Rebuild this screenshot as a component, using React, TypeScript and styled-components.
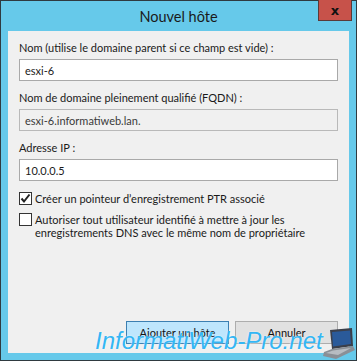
import React from "react";
import styled, { createGlobalStyle } from "styled-components";

const Global = createGlobalStyle`
  html, body { margin: 0; padding: 0; background: #ffffff; }
  #root { width: 357px; height: 361px; }
`;

const Window = styled.div`
  position: relative;
  box-sizing: border-box;
  width: 357px;
  height: 361px;
  border: 1px solid #2f3a40;
  background: #66c9ea;
  display: flex;
  flex-direction: column;
  padding: 0 7px 7px 7px;
  font-family: Lato, "Noto Sans", sans-serif;
`;

const TitleBar = styled.div`
  height: 30px;
  flex: none;
  display: flex;
  align-items: center;
  justify-content: center;
`;

const Title = styled.div`
  font-size: 14.5px;
  color: #1a1a1a;
  margin-top: 1px;
`;

const CloseButton = styled.div`
  position: absolute;
  top: -1px;
  right: 4px;
  width: 34px;
  height: 21px;
  box-sizing: border-box;
  background: #c7524a;
  border: 1px solid #5a3a38;
  border-top: none;
  display: flex;
  align-items: center;
  justify-content: center;
  color: #111;
  font-family: "DejaVu Sans", sans-serif;
  font-weight: bold;
  font-size: 13px;
  line-height: 1;
`;

const Body = styled.div`
  flex: 1;
  background: #f0f0f0;
  display: flex;
  flex-direction: column;
  padding: 9px 11px 0 11px;
  font-size: 11px;
  color: #1a1a1a;
  white-space: nowrap;
`;

const Field = styled.div`
  display: flex;
  flex-direction: column;
  gap: 3px;
  margin-bottom: 9px;
`;

const Label = styled.div`
  line-height: 16px;
`;

const Input = styled.div<{ $disabled?: boolean }>`
  box-sizing: border-box;
  height: 22px;
  border: 1px solid ${(p) => (p.$disabled ? "#b9b9b9" : "#a9a9a9")};
  background: ${(p) => (p.$disabled ? "#f0f0f0" : "#ffffff")};
  color: ${(p) => (p.$disabled ? "#3a3a3a" : "#1a1a1a")};
  padding: 0 5px;
  display: flex;
  align-items: center;
`;

const CheckRow = styled.div`
  display: flex;
  align-items: flex-start;
  gap: 3px;
  margin-top: 2px;
  margin-bottom: 6px;
`;

const Box = styled.div`
  box-sizing: border-box;
  width: 13px;
  height: 13px;
  flex: none;
  border: 1px solid #333;
  background: #fff;
  display: flex;
  align-items: center;
  justify-content: center;
`;

const CheckText = styled.div`
  line-height: 13px;
`;

const Spacer = styled.div`
  flex: 1;
`;

const Buttons = styled.div`
  display: flex;
  justify-content: flex-end;
  gap: 6px;
  margin-bottom: 9px;
`;

const Button = styled.div<{ $primary?: boolean }>`
  box-sizing: border-box;
  width: 103px;
  height: 23px;
  display: flex;
  align-items: center;
  justify-content: center;
  background: ${(p) => (p.$primary ? "#bee6fd" : "#e1e1e1")};
  border: 1px solid ${(p) => (p.$primary ? "#3c7fb1" : "#adadad")};
  color: #111;
`;

const Watermark = styled.div`
  position: absolute;
  left: 94px;
  top: 326px;
  font-family: "Liberation Sans", Arial, sans-serif;
  font-style: italic;
  font-size: 24px;
  line-height: 28px;
  color: #34b6f4;
  text-shadow: 0 0 2px rgba(255, 255, 255, 0.8);
  letter-spacing: 0;
`;

const Laptop = styled.svg`
  position: absolute;
  right: 0;
  bottom: 0;
`;

export default function App() {
  return (
    <>
      <Global />
      <Window>
        <TitleBar>
          <Title>Nouvel hôte</Title>
        </TitleBar>
        <CloseButton>x</CloseButton>
        <Body>
          <Field>
            <Label>Nom (utilise le domaine parent si ce champ est vide) :</Label>
            <Input>esxi-6</Input>
          </Field>
          <Field>
            <Label>Nom de domaine pleinement qualifié (FQDN) :</Label>
            <Input $disabled>esxi-6.informatiweb.lan.</Input>
          </Field>
          <Field>
            <Label>Adresse IP :</Label>
            <Input>10.0.0.5</Input>
          </Field>
          <CheckRow>
            <Box>
              <svg width="11" height="11" viewBox="0 0 11 11">
                <path d="M1.5 5.5 L4 8.5 L9.5 1.5" stroke="#222" strokeWidth="2" fill="none" />
              </svg>
            </Box>
            <CheckText>Créer un pointeur d’enregistrement PTR associé</CheckText>
          </CheckRow>
          <CheckRow>
            <Box />
            <CheckText>
              Autoriser tout utilisateur identifié à mettre à jour les
              <br />
              enregistrements DNS avec le même nom de propriétaire
            </CheckText>
          </CheckRow>
          <Spacer />
          <Buttons>
            <Button $primary>Ajouter un hôte</Button>
            <Button>Annuler</Button>
          </Buttons>
        </Body>
        <Watermark>InformatiWeb-Pro.net</Watermark>
        <Laptop width="34" height="32" viewBox="0 0 34 32">
          <polygon points="8,2 30,0 31,18 10,21" fill="#3b3f4a" />
          <polygon points="10,4 28,2.5 29,16 11,18.5" fill="#2a5a9a" />
          <polygon points="2,24 10,21 31,18 33,22 14,31 1,28" fill="#8a8f96" />
          <polygon points="4,25 11,22.5 29,20 16,27" fill="#b7bcc2" />
        </Laptop>
      </Window>
    </>
  );
}
